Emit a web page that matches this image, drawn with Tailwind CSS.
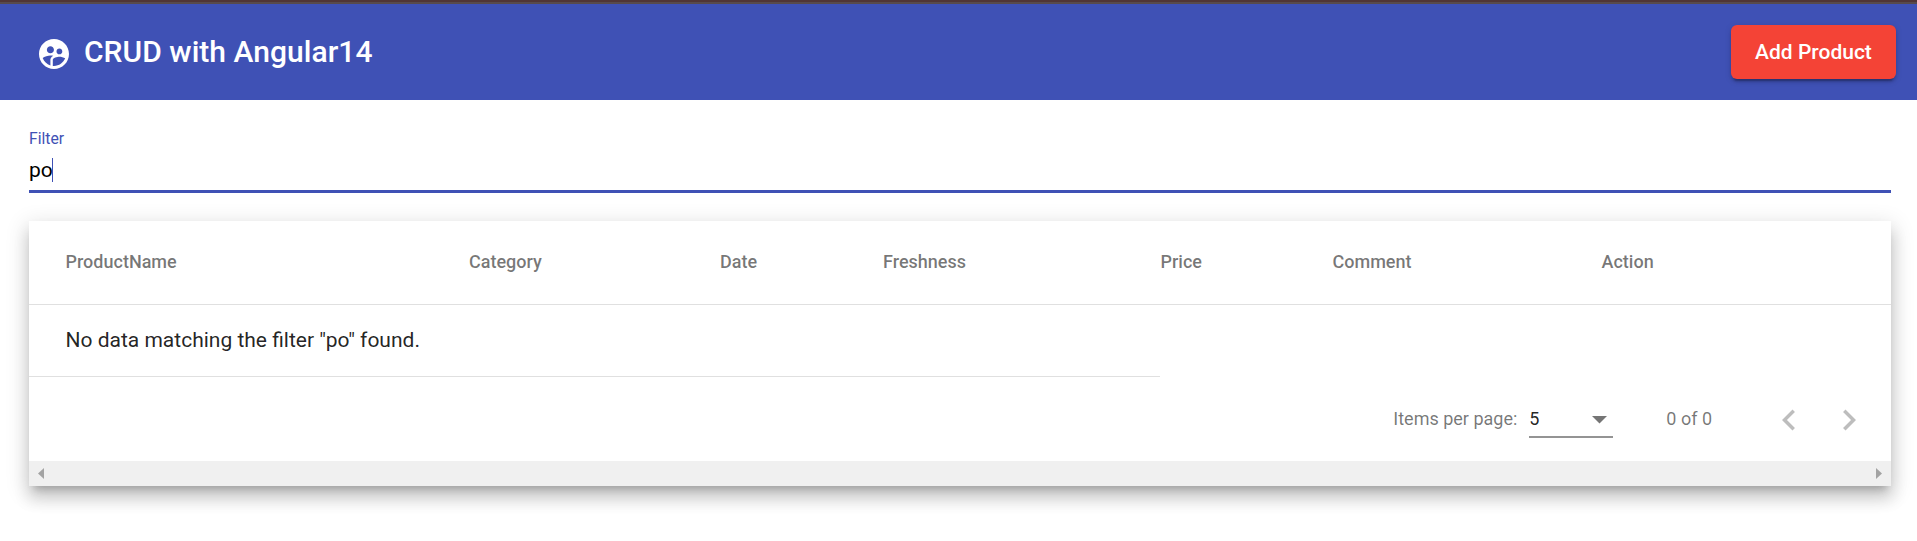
<!DOCTYPE html>
<html lang="en">
<head>
<meta charset="utf-8">
<title>CRUD with Angular14</title>
<script src="https://cdn.jsdelivr.net/npm/@tailwindcss/browser@4"></script>
</head>
<body class="h-[541px] overflow-hidden bg-white font-[Roboto,sans-serif] text-[21px] text-black/87">
  <div class="h-0.5 bg-[#503535]"></div>
  <div class="h-0.5 bg-[#584a4c]"></div>
  <header class="flex h-24 items-center bg-[#3f51b5] pr-[21px] pl-9 text-white">
    <svg class="mt-1 size-9" viewBox="0 0 24 24" fill="currentColor"><path d="M11.99 2c-5.52 0-10 4.48-10 10s4.48 10 10 10 10-4.48 10-10-4.48-10-10-10zm3.61 6.34c1.07 0 1.93.86 1.93 1.93 0 1.07-.86 1.93-1.93 1.93-1.07 0-1.93-.86-1.93-1.93-.01-1.07.86-1.93 1.93-1.93zm-6-1.58c1.3 0 2.36 1.06 2.36 2.36 0 1.3-1.06 2.36-2.36 2.36s-2.36-1.06-2.36-2.36c0-1.31 1.05-2.36 2.36-2.36zm0 9.13v3.75c-2.4-.75-4.3-2.6-5.14-4.96 1.05-1.12 3.67-1.69 5.14-1.69.53 0 1.2.08 1.9.22-1.64.87-1.9 2.02-1.9 2.68zM11.99 20c-.27 0-.53-.01-.79-.04v-4.07c0-1.42 2.94-2.13 4.4-2.13 1.07 0 2.92.39 3.84 1.15-1.17 2.97-4.06 5.09-7.45 5.09z"/></svg>
    <h1 class="ml-3 pb-px text-[30px] font-medium tracking-[0.04px]">CRUD with Angular14</h1>
    <button class="ml-auto h-[54px] w-[165px] rounded-md bg-[#f44336] pt-0.5 text-[21px] font-medium shadow-[0_4.5px_1.5px_-3px_rgba(0,0,0,.2),0_3px_3px_0_rgba(0,0,0,.14),0_1.5px_7.5px_0_rgba(0,0,0,.12)]">Add Product</button>
  </header>
  <main class="pr-[26px] pl-[29px]">
    <label class="flex h-[93px] flex-col border-b-3 border-[#3f51b5] pt-[29px]">
      <span class="text-[15.75px] leading-5 text-[#3f51b5]">Filter</span>
      <span class="mt-[9px] flex h-6 items-center text-black"><span class="pt-0.5">po</span><i class="-ml-px h-6 w-px bg-[#3f51b5]"></i></span>
    </label>
    <section class="mt-7 h-[265px] bg-white shadow-[0_7.5px_7.5px_-4.5px_rgba(0,0,0,.2),0_12px_15px_1.5px_rgba(0,0,0,.14),0_4.5px_21px_3px_rgba(0,0,0,.12)]">
      <div class="grid h-21 grid-cols-[403.500px_251px_163px_277.500px_172px_269px_1fr] items-center border-b border-black/12 pb-0.5 pl-[36.5px] text-lg font-medium text-black/54">
        <span>ProductName</span><span>Category</span><span>Date</span><span>Freshness</span><span>Price</span><span>Comment</span><span>Action</span>
      </div>
      <div class="flex h-18 w-[1131px] items-center border-b border-black/12 pl-[36.5px]">No data matching the filter "po" found.</div>
      <div class="flex h-21 items-center justify-end pr-[21px] text-lg text-black/54">
        <span>Items per page:</span>
        <div class="-mt-[3px] ml-3 flex h-[41px] w-[84px] items-center justify-between border-b-2 border-black/42 pr-1.5">
          <span class="pt-[5px] text-black/87">5</span>
          <svg class="mt-[7px] h-[7.5px] w-[15px]" viewBox="0 0 10 5" fill="currentColor"><path d="M0 0h10L5 5z"/></svg>
        </div>
        <span class="ml-[53px]">0 of 0</span>
        <svg class="mt-0.5 ml-[56px] size-[42px] text-black/26" viewBox="0 0 24 24" fill="currentColor"><path d="M15.41 7.41L14 6l-6 6 6 6 1.41-1.41L10.83 12z"/></svg>
        <svg class="mt-0.5 ml-[18px] size-[42px] text-black/26" viewBox="0 0 24 24" fill="currentColor"><path d="M10 6L8.59 7.41 13.17 12l-4.58 4.59L10 18l6-6z"/></svg>
      </div>
      <div class="flex h-[25px] items-center justify-between bg-[#f0f0f0] px-[9px] text-[#a3a3a3]">
        <svg class="h-[11px] w-1.5" viewBox="0 0 6 11" fill="currentColor"><path d="M6 0v11L0 5.500z"/></svg>
        <svg class="h-[11px] w-1.5" viewBox="0 0 6 11" fill="currentColor"><path d="M0 0v11l6-5.500z"/></svg>
      </div>
    </section>
  </main>
</body>
</html>
